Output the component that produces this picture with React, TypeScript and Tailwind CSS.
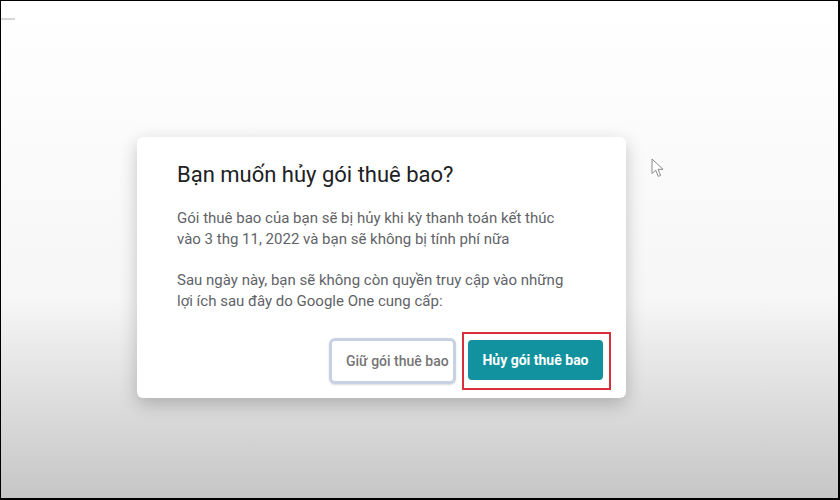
import React from "react";

function Cursor() {
  return (
    <svg width="14" height="20" viewBox="0 0 14 20" className="absolute left-[650px] top-[157px]">
      <path
        d="M1 1 L1 15.5 L4.6 12.2 L7.3 18.4 L9.6 17.4 L7 11.3 L12 11.3 Z"
        fill="#ffffff"
        stroke="#8a8a8a"
        strokeWidth="1"
        strokeLinejoin="round"
      />
    </svg>
  );
}

export default function App() {
  return (
    <div
      className="relative w-[840px] h-[500px] overflow-hidden border-t border-l border-r-2 border-b-2 border-black bg-gradient-to-b from-white via-[#f6f6f6] via-60% to-[#c6c6c6]"
      style={{ fontFamily: "Roboto, 'Liberation Sans', Arial, sans-serif" }}
    >
      {/* faint background page remnants */}
      <div className="absolute left-0 top-[17px] h-[2px] w-[14px] bg-[#d6d6d6]" />

      <div className="pl-[136px] pt-[136px]">
        <div className="w-[489px] rounded-md bg-white pl-10 pr-[15px] pt-[24px] pb-2 shadow-[0_6px_18px_rgba(0,0,0,0.22)]">
          <h2 className="text-[22px] leading-[28px] text-[#202124]">Bạn muốn hủy gói thuê bao?</h2>
          <p className="mt-[19px] text-[15px] leading-[21px] text-[#5f6368]">
            Gói thuê bao của bạn sẽ bị hủy khi kỳ thanh toán kết thúc
            <br />
            vào 3 thg 11, 2022 và bạn sẽ không bị tính phí nữa
          </p>
          <p className="mt-[20px] text-[15px] leading-[21px] text-[#5f6368]">
            Sau ngày này, bạn sẽ không còn quyền truy cập vào những
            <br />
            lợi ích sau đây do Google One cung cấp:
          </p>
          <div className="mt-[20px] flex items-center justify-end gap-[6px]">
            <button className="flex h-[46px] w-[127px] items-center rounded-md border-[3px] border-[#c8d0e3] bg-white pl-[14px] text-[14px] font-medium text-[#757575] shadow-[0_1px_2px_rgba(0,0,0,0.15)]">
              Giữ gói thuê bao
            </button>
            <div className="border-2 border-[#d7303a] pl-1 pr-1.5 pt-1.5 pb-2">
              <button className="flex h-[40px] w-[135px] items-center justify-center rounded bg-[#12929e] text-[14px] font-bold text-white">
                Hủy gói thuê bao
              </button>
            </div>
          </div>
        </div>
      </div>

      <Cursor />
    </div>
  );
}
